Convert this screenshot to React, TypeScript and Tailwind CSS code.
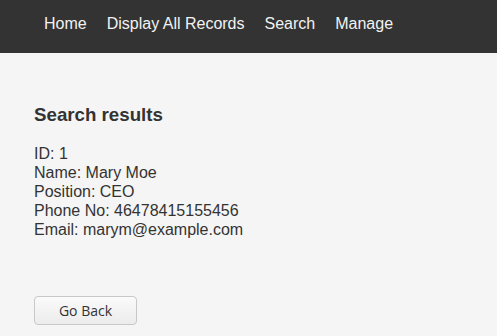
export default function App() {
  return (
    <div className="min-h-[336px] bg-[#f5f5f5] text-[#333]" style={{ fontFamily: '"Liberation Sans", Arial, sans-serif' }}>
      <nav className="h-[53px] bg-[#333] flex items-center pl-[34px]">
        {["Home", "Display All Records", "Search", "Manage"].map((t) => (
          <a key={t} className="px-[10px] text-[16px] text-[#f2f2f2] leading-[18px] pb-[6px]">{t}</a>
        ))}
      </nav>
      <main className="px-[34px] pt-[52px]">
        <h2 className="text-[18.72px] font-bold leading-[20px] text-[#333]">Search results</h2>
        <div className="mt-[19px] text-[16px] leading-[19px] text-[#333]">
          <div>ID: 1</div>
          <div>Name: Mary Moe</div>
          <div>Position: CEO</div>
          <div>Phone No: 46478415155456</div>
          <div>Email: marym@example.com</div>
        </div>
        <button
          className="mt-[57px] w-[103px] h-[29px] rounded-[4px] border border-[#c8c8c8] bg-gradient-to-b from-[#fafafa] to-[#ececec] text-[14px] text-[#333]"
          style={{ fontFamily: '"Open Sans", sans-serif' }}
        >
          Go Back
        </button>
      </main>
    </div>
  );
}
